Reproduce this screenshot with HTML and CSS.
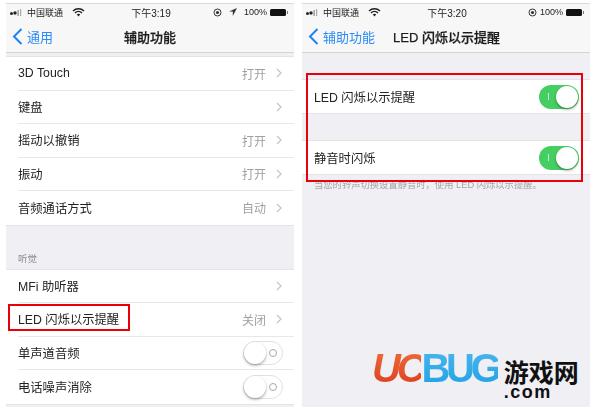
FILE: index.html
```html
<!DOCTYPE html>
<html lang="zh">
<head>
<meta charset="utf-8">
<title>LED 闪烁以示提醒</title>
<link rel="stylesheet" href="styles.css">
</head>
<body>
<div class="stage">
  <section class="phone">
    <div class="status">
      <div class="st-left">
        <svg class="signal" width="12" height="7" viewBox="0 0 12 7"><circle cx="1.5" cy="4.5" r="1.5" fill="#222"/><circle cx="5" cy="4" r="1.7" fill="#222"/><rect x="7.5" y="1" width="1.2" height="6" fill="#888"/><rect x="10" y="0" width="1.2" height="7" fill="#aaa"/></svg>
        <span>中国联通</span>
        <svg class="wifi" width="13" height="9" viewBox="0 0 13 9"><path d="M1 3a8 8 0 0 1 11 0M3 5a5 5 0 0 1 7 0" fill="none" stroke="#222" stroke-width="1.4"/><path d="M4.8 6.6a2.5 2.5 0 0 1 3.4 0L6.5 8.6z" fill="#222"/></svg>
      </div>
      <div class="st-time">下午3:19</div>
      <div class="st-right">
        <svg width="9" height="9" viewBox="0 0 9 9"><circle cx="4.5" cy="4.5" r="3.5" fill="none" stroke="#333" stroke-width="1"/><circle cx="4.5" cy="4.5" r="1.6" fill="#333"/></svg>
        <svg class="loc" width="8" height="8" viewBox="0 0 8 8"><path d="M8 0L0 3.6h3.8V8z" fill="#333"/></svg>
        <span>100%</span>
        <span class="battery"></span>
      </div>
    </div>
    <header class="nav">
      <div class="back">
        <svg width="11" height="17" viewBox="0 0 11 17"><path d="M9.5 1L2 8.5l7.5 7.5" fill="none" stroke="#1a84f5" stroke-width="2"/></svg>
        <span>通用</span>
      </div>
      <div class="title centered">辅助功能</div>
    </header>
    <div class="top-gap"></div>
    <div class="group">
      <div class="row"><span class="label">3D Touch</span><span class="value">打开</span><svg class="chev" width="6" height="10" viewBox="0 0 6 10"><path d="M1 1l4 4-4 4"/></svg></div>
      <div class="row"><span class="label">键盘</span><svg class="chev" width="6" height="10" viewBox="0 0 6 10"><path d="M1 1l4 4-4 4"/></svg></div>
      <div class="row"><span class="label">摇动以撤销</span><span class="value">打开</span><svg class="chev" width="6" height="10" viewBox="0 0 6 10"><path d="M1 1l4 4-4 4"/></svg></div>
      <div class="row"><span class="label">振动</span><span class="value">打开</span><svg class="chev" width="6" height="10" viewBox="0 0 6 10"><path d="M1 1l4 4-4 4"/></svg></div>
      <div class="row"><span class="label">音频通话方式</span><span class="value">自动</span><svg class="chev" width="6" height="10" viewBox="0 0 6 10"><path d="M1 1l4 4-4 4"/></svg></div>
    </div>
    <div class="section-title">听觉</div>
    <div class="group">
      <div class="row"><span class="label">MFi 助听器</span><svg class="chev" width="6" height="10" viewBox="0 0 6 10"><path d="M1 1l4 4-4 4"/></svg></div>
      <div class="row"><span class="label">LED 闪烁以示提醒</span><span class="value">关闭</span><svg class="chev" width="6" height="10" viewBox="0 0 6 10"><path d="M1 1l4 4-4 4"/></svg></div>
      <div class="row"><span class="label">单声道音频</span><span class="toggle off"><i class="o"></i><b></b></span></div>
      <div class="row"><span class="label">电话噪声消除</span><span class="toggle off"><i class="o"></i><b></b></span></div>
    </div>
    <div class="mark mark-left"></div>
  </section>

  <section class="phone">
    <div class="status">
      <div class="st-left">
        <svg class="signal" width="12" height="7" viewBox="0 0 12 7"><circle cx="1.5" cy="4.5" r="1.5" fill="#222"/><circle cx="5" cy="4" r="1.7" fill="#222"/><rect x="7.5" y="1" width="1.2" height="6" fill="#888"/><rect x="10" y="0" width="1.2" height="7" fill="#aaa"/></svg>
        <span>中国联通</span>
        <svg class="wifi" width="13" height="9" viewBox="0 0 13 9"><path d="M1 3a8 8 0 0 1 11 0M3 5a5 5 0 0 1 7 0" fill="none" stroke="#222" stroke-width="1.4"/><path d="M4.8 6.6a2.5 2.5 0 0 1 3.4 0L6.5 8.6z" fill="#222"/></svg>
      </div>
      <div class="st-time">下午3:20</div>
      <div class="st-right">
        <svg width="9" height="9" viewBox="0 0 9 9"><circle cx="4.5" cy="4.5" r="3.5" fill="none" stroke="#333" stroke-width="1"/><circle cx="4.5" cy="4.5" r="1.6" fill="#333"/></svg>
        <span>100%</span>
        <span class="battery"></span>
      </div>
    </div>
    <header class="nav">
      <div class="back">
        <svg width="11" height="17" viewBox="0 0 11 17"><path d="M9.5 1L2 8.5l7.5 7.5" fill="none" stroke="#1a84f5" stroke-width="2"/></svg>
        <span>辅助功能</span>
      </div>
      <div class="title led-title">LED 闪烁以示提醒</div>
    </header>
    <div class="gap-a"></div>
    <div class="group"><div class="row tall"><span class="label">LED 闪烁以示提醒</span><span class="toggle on"><i class="l"></i><b></b></span></div></div>
    <div class="gap-b"></div>
    <div class="group"><div class="row tall"><span class="label">静音时闪烁</span><span class="toggle on"><i class="l"></i><b></b></span></div></div>
    <p class="note">当您的铃声切换设置静音时，使用 LED 闪烁以示提醒。</p>
    <div class="mark mark-right"></div>
    <div class="logo">
      <div class="uc"><span class="uc-red">UC</span><span class="uc-blue">BUG</span></div>
      <div class="cn"><span class="cn-text">游戏网</span><span class="com">.com</span></div>
    </div>
  </section>
</div>
</body>
</html>
```

FILE: styles.css
```css
* { box-sizing: border-box; }
html, body { margin: 0; padding: 0; background: #fff; }
body {
  width: 590px;
  height: 407px;
  overflow: hidden;
  font-family: "Liberation Sans", "Noto Sans CJK SC", sans-serif;
  color: #222;
}
.stage {
  display: flex;
  gap: 8px;
  padding: 3px 0 0 6px;
  height: 407px;
  background: #fff;
}
.phone {
  position: relative;
  width: 288px;
  height: 404px;
  background: #efeff4;
  border-top: 1px solid #d8d8d8;
  overflow: hidden;
}
.status {
  height: 16px;
  padding: 0 5px 0 4px;
  background: #f7f7f8;
  display: grid;
  grid-template-columns: 1fr auto 1fr;
  align-items: center;
  font-size: 9px;
  color: #222;
  filter: blur(.3px);
}
.st-left { display: flex; align-items: center; gap: 5px; }
.st-left .wifi { margin-left: 4px; }
.st-time { font-size: 10px; margin-left: 3px; }
.st-right { display: flex; align-items: center; justify-content: flex-end; gap: 3px; font-size: 9px; }
.st-right .loc { margin: 0 4px 0 4px; }
.battery {
  position: relative;
  width: 16px;
  height: 7px;
  margin-right: 3px;
  background: #111;
  border-radius: 1.5px;
}
.battery::after {
  content: "";
  position: absolute;
  left: 17px;
  top: 2px;
  width: 1px;
  height: 3px;
  background: #777;
}
.nav {
  position: relative;
  height: 33px;
  display: flex;
  align-items: center;
  padding-left: 6px;
  background: #f7f7f8;
  border-bottom: 1px solid #d3d3d6;
}
.back {
  display: flex;
  align-items: center;
  gap: 4px;
  color: #2a8cf4;
  font-size: 13px;
  filter: blur(.3px);
}
.title { font-size: 13px; color: #1c1c1c; font-weight: 500; -webkit-text-stroke: .25px #1c1c1c; filter: blur(.3px); }
.centered { position: absolute; left: 0; right: 0; text-align: center; }
.led-title { margin-left: 18px; }
.top-gap { height: 3px; }
.group { background: #fff; border-top: 1px solid #e4e4e6; border-bottom: 1px solid #e4e4e6; }
.row {
  height: 33.5px;
  display: flex;
  align-items: center;
  margin-left: 12px;
  padding-right: 12px;
  border-bottom: 1px solid #e8e8ea;
  font-size: 12.3px;
}
.row:last-child { border-bottom: 0; }
.row.tall { height: 33px; }
.label { flex: 1; filter: blur(.3px); }
.value { color: #a0a0a4; margin-right: 10px; font-size: 12px; filter: blur(.3px); }
.chev { fill: none; stroke: #c4c4c8; stroke-width: 1.2; }
.section-title {
  height: 43px;
  padding: 26px 0 0 12px;
  font-size: 9.5px;
  line-height: 14px;
  color: #8a8a8e;
  filter: blur(.3px);
}
.toggle {
  position: relative;
  width: 40px;
  height: 24px;
  border-radius: 12px;
  margin-right: -1px;
  flex: none;
}
.toggle b {
  position: absolute;
  top: 1px;
  width: 22px;
  height: 22px;
  border-radius: 50%;
  background: #fff;
  box-shadow: 0 1.5px 3px rgba(0, 0, 0, .35);
}
.toggle.off { border: 1px solid #e2e2e4; background: #fff; }
.toggle.off b { left: 0; top: 0; }
.toggle.on { background: #45cf62; }
.toggle.on b { right: 1px; }
.toggle .o {
  position: absolute;
  right: 5px;
  top: 7px;
  width: 8px;
  height: 8px;
  border: 1px solid #a8a8a8;
  border-radius: 50%;
}
.toggle .l {
  position: absolute;
  left: 9px;
  top: 8px;
  width: 1px;
  height: 7px;
  background: #c8f0d0;
}
.gap-a { height: 26px; }
.gap-b { height: 26px; }
.note {
  margin: 4px 0 0 12px;
  font-size: 9.3px;
  line-height: 12px;
  color: #a4a4a8;
  white-space: nowrap;
  filter: blur(.4px);
}
.mark { position: absolute; border: 2px solid #e8000b; }
.mark-left { left: 2px; top: 300px; width: 122px; height: 27px; }
.mark-right { left: 4px; top: 69px; width: 277px; height: 109px; }
.logo {
  position: absolute;
  left: 70px;
  top: 342px;
  display: flex;
  gap: 6px;
  white-space: nowrap;
}
.uc {
  font-size: 40px;
  line-height: 44px;
  font-weight: 700;
  font-style: italic;
  letter-spacing: -4.2px;
}
.uc-red {
  background: linear-gradient(#f0703a, #dc3a1e);
  -webkit-background-clip: text;
  background-clip: text;
  color: transparent;
}
.uc-blue {
  background: linear-gradient(#4cb8ee, #1fa0e4);
  -webkit-background-clip: text;
  background-clip: text;
  color: transparent;
  font-style: normal;
}
.cn { display: flex; flex-direction: column; align-items: flex-start; padding-top: 13px; color: #111; }
.cn-text { font-size: 25px; line-height: 25px; font-family: "Noto Sans CJK SC", sans-serif; font-weight: 700; }
.com { font-size: 18px; line-height: 16px; font-weight: 700; letter-spacing: 1.5px; }
```
